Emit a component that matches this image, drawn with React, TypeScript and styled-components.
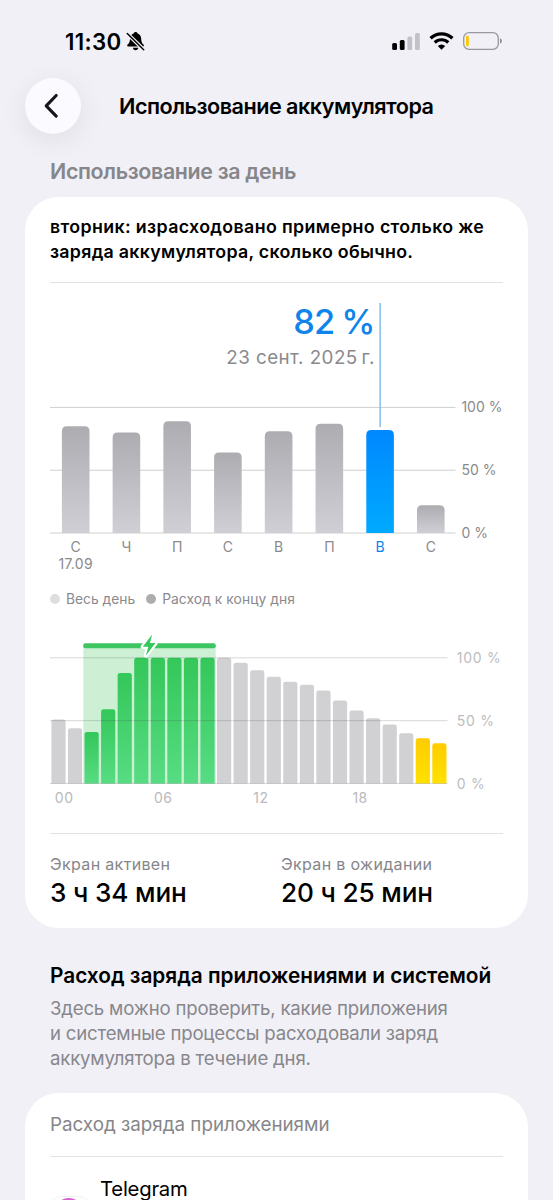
import React from 'react';
import styled, { createGlobalStyle } from 'styled-components';

const GlobalStyle = createGlobalStyle`
  body {
    margin: 0;
    background: #f1f0f6;
    font-family: Inter, 'Noto Sans', sans-serif;
    color: #000000;
    overflow: hidden;
  }
`;

const Screen = styled.div`
  width: 553px;
  height: 1200px;
  overflow: hidden;
  background: #f1f0f6;
`;

const StatusBar = styled.div`
  display: flex;
  justify-content: space-between;
  align-items: center;
  box-sizing: border-box;
  height: 78px;
  padding: 4px 50px 0 65px;
`;

const TimeBlock = styled.div`
  display: flex;
  align-items: center;
  gap: 4px;
  font-size: 22.3px;
  font-weight: 600;
  letter-spacing: 0.35px;
`;

const StatusIcons = styled.div`
  display: flex;
  align-items: center;
  gap: 9px;
`;

const NavBar = styled.header`
  display: flex;
  align-items: center;
  gap: 38px;
  height: 56px;
  padding-left: 25px;
`;

const BackButton = styled.button`
  display: flex;
  justify-content: center;
  align-items: center;
  width: 56px;
  height: 56px;
  padding: 0;
  border: none;
  border-radius: 50%;
  background: #fafaff;
  box-shadow: 0 6px 28px rgba(0, 0, 0, 0.08);
`;

const NavTitle = styled.h1`
  margin: 0;
  font-size: 21.6px;
  font-weight: 600;
  letter-spacing: -0.5px;
  white-space: nowrap;
`;

const SectionLabel = styled.h2`
  margin: 23px 0 0 50px;
  height: 28px;
  line-height: 28px;
  font-size: 21.4px;
  font-weight: 600;
  letter-spacing: -0.34px;
  color: #86868b;
`;

const Card = styled.section<{ $top: number }>`
  box-sizing: border-box;
  width: 503px;
  margin: ${({ $top }) => $top}px 0 0 25px;
  padding: 0 25px;
  border-radius: 34px;
  background: #ffffff;
`;

const Summary = styled.p`
  margin: 0;
  padding: 17px 0 18px;
  font-size: 17.8px;
  font-weight: 600;
  line-height: 25.2px;
  white-space: nowrap;
`;

const SummaryLine = styled.span<{ $spacing: number }>`
  display: block;
  letter-spacing: ${({ $spacing }) => $spacing}px;
`;

const Divider = styled.div`
  height: 1px;
  background: #e2e2e4;
`;

const Chart = styled.svg`
  display: block;
  overflow: visible;
`;

const Legend = styled.div`
  display: flex;
  align-items: center;
  gap: 11px;
  height: 24px;
  font-size: 13.8px;
  color: #8a8a8e;
`;

const LegendItem = styled.div<{ $dot: string; $spacing: number }>`
  display: flex;
  align-items: center;
  gap: 6px;
  letter-spacing: ${({ $spacing }) => $spacing}px;
  white-space: nowrap;

  &::before {
    content: '';
    width: 10px;
    height: 10px;
    border-radius: 50%;
    background: ${({ $dot }) => $dot};
  }
`;

const Stats = styled.div`
  display: grid;
  grid-template-columns: 231px 1fr;
  padding: 20px 0 18px;
`;

const StatLabel = styled.div`
  height: 22px;
  line-height: 20px;
  font-size: 16px;
  letter-spacing: 0.34px;
  color: #86868a;
`;

const StatValue = styled.div`
  height: 34px;
  line-height: 34px;
  font-size: 26.2px;
  font-weight: 500;
  letter-spacing: -0.17px;
`;

const Intro = styled.div`
  padding: 34px 0 0 50px;
`;

const IntroTitle = styled.h2`
  margin: 0 0 6px;
  line-height: 28px;
  font-size: 20.8px;
  font-weight: 600;
  white-space: nowrap;
`;

const IntroText = styled.p`
  margin: 0;
  line-height: 25px;
  font-size: 18.6px;
  letter-spacing: -0.19px;
  color: #87878c;
`;

const ListHeader = styled.div`
  padding: 20px 0 19px;
  line-height: 24px;
  font-size: 18.8px;
  color: #86868a;
`;

const AppRow = styled.div`
  display: flex;
  align-items: flex-start;
  gap: 10px;
  height: 90px;
  padding-top: 20px;
`;

const AppIcon = styled.svg`
  margin-top: 19px;
`;

const AppName = styled.div`
  line-height: 24px;
  font-size: 20.3px;
  letter-spacing: -0.22px;
`;

const AxisText = styled.text<{ $color?: string; $spacing?: number }>`
  font-size: 14px;
  letter-spacing: ${({ $spacing = 0 }) => $spacing}px;
  fill: ${({ $color = '#8a8a8e' }) => $color};
`;

const PercentText = styled.text`
  font-size: 34.4px;
  font-weight: 500;
  letter-spacing: -1px;
  word-spacing: -1px;
  fill: #0f84ea;
`;

const DateText = styled.text`
  font-size: 18.8px;
  letter-spacing: 0.45px;
  fill: #8a8a8e;
`;

const week = [
  { day: 'С', value: 85, date: '17.09' },
  { day: 'Ч', value: 80 },
  { day: 'П', value: 89 },
  { day: 'С', value: 64 },
  { day: 'В', value: 81 },
  { day: 'П', value: 87 },
  { day: 'В', value: 82, selected: true },
  { day: 'С', value: 22 },
];

const hours = [
  51, 44, 41, 59, 88, 100, 100, 100, 100, 100, 100, 96, 90, 85, 81, 78.5, 74,
  66, 58, 52, 47, 40, 36, 32,
];

const levels = [100, 50, 0];

// column with rounded top corners only
const columnPath = (
  x: number,
  y: number,
  w: number,
  bottom: number,
  r: number,
) =>
  `M${x} ${bottom}V${y + r}q0-${r} ${r}-${r}H${x + w - r}q${r} 0 ${r} ${r}V${bottom}Z`;

function WeekChart() {
  const bottom = 250;
  const scale = 1.256;
  return (
    <Chart width="453" height="304" viewBox="0 0 453 304">
      <defs>
        <linearGradient id="day" x1="0" y1="0" x2="0" y2="1">
          <stop offset="0" stopColor="#adacb1" />
          <stop offset="1" stopColor="#d0cfd6" />
        </linearGradient>
        <linearGradient id="selectedDay" x1="0" y1="0" x2="0" y2="1">
          <stop offset="0" stopColor="#0088ff" />
          <stop offset="1" stopColor="#00aaff" />
        </linearGradient>
      </defs>
      {levels.map((level) => (
        <g key={level}>
          <rect
            y={bottom - level * scale - 0.5}
            width="405.5"
            height="1"
            fill="#cfcfd1"
          />
          <AxisText x="411.4" y={bottom + 4.8 - level * scale}>
            {level} %
          </AxisText>
        </g>
      ))}
      <PercentText x="324.5" y="51" textAnchor="end">
        82 %
      </PercentText>
      <DateText x="324.9" y="81.3" textAnchor="end">
        23 сент. 2025{'\u2009'}г.
      </DateText>
      {week.map(({ day, value, date, selected }, i) => {
        const x = 11.9 + i * 50.73;
        const center = x + 13.8;
        return (
          <g key={i}>
            <path
              d={columnPath(x, bottom - value * scale, 27.6, bottom, 5)}
              fill={selected ? 'url(#selectedDay)' : 'url(#day)'}
            />
            {selected && (
              <rect
                x={center - 0.6}
                y="20"
                width="1.3"
                height="124"
                fill="#75b5e6"
              />
            )}
            <AxisText
              x={center}
              y="268.8"
              textAnchor="middle"
              $color={selected ? '#0a84f0' : undefined}
            >
              {day}
            </AxisText>
            {date && (
              <AxisText x={center} y="286" textAnchor="middle" $spacing={0.3}>
                {date}
              </AxisText>
            )}
          </g>
        );
      })}
    </Chart>
  );
}

function DayChart() {
  const bottom = 172.5;
  const scale = 1.257;
  const fillOf = (i: number) => {
    if (i >= 2 && i < 10) return 'url(#charging)';
    return i > 21 ? 'url(#lowPower)' : '#d1d1d3';
  };
  return (
    <Chart width="453" height="222" viewBox="0 0 453 222">
      <defs>
        <linearGradient id="charging" x1="0" y1="0" x2="0" y2="1">
          <stop offset="0" stopColor="#34c759" />
          <stop offset="1" stopColor="#57dc83" />
        </linearGradient>
        <linearGradient id="lowPower" x1="0" y1="0" x2="0" y2="1">
          <stop offset="0" stopColor="#ffcc00" />
          <stop offset="1" stopColor="#ffe100" />
        </linearGradient>
      </defs>
      <rect x="33.3" y="34" width="132.4" height="138.5" fill="#cdf0d5" />
      <rect x="33.3" y="32.3" width="132.4" height="5" rx="2" fill="#3cc560" />
      {hours.map((value, i) => (
        <path
          key={i}
          d={columnPath(
            1.4 + i * 16.56,
            bottom - value * scale,
            14.2,
            bottom,
            2.4,
          )}
          fill={fillOf(i)}
        />
      ))}
      {levels.map((level) => (
        <g key={level}>
          <rect
            y={bottom - level * scale - 0.5}
            width="397.5"
            height="1"
            fill="rgba(60, 60, 67, 0.2)"
          />
          <AxisText
            x="406.7"
            y={bottom + 5 - level * scale}
            $color="#bcbcbe"
            $spacing={0.75}
          >
            {level} %
          </AxisText>
        </g>
      ))}
      {['00', '06', '12', '18'].map((hour, i) => (
        <AxisText
          key={hour}
          x={4.8 + i * 99.2}
          y="192"
          $color="#b9b9bb"
          $spacing={0.5}
        >
          {hour}
        </AxisText>
      ))}
      <path
        d="M102.2 23.6 92.8 35.8h5.5l-2.4 8.6 9.6-12.3h-5.6z"
        fill="#34c759"
        stroke="#ffffff"
        strokeWidth="4.4"
        strokeLinejoin="round"
        paintOrder="stroke"
      />
    </Chart>
  );
}

function BellOffIcon() {
  return (
    <svg width="19" height="20" viewBox="0 0 19 20">
      <path
        d="M9.6 1c1 0 1.8.7 2 1.6 2.3.8 3.5 2.8 3.6 5.3.1 3 1 4.3 2.3 5.7.4.5.5 1 .3 1.4-.2.4-.6.6-1.1.6H2.5c-.6 0-1-.2-1.2-.6-.2-.5-.1-.9.3-1.4C3 12.2 3.900 10.900 4 7.900c.1-2.500 1.300-4.500 3.600-5.300.2-.9 1-1.600 2-1.600zM6.800 16.700h5.600c-.3 1.500-1.400 2.500-2.800 2.500s-2.500-1-2.800-2.500z"
        fill="#000"
      />
      <path d="M1.300 2.500 17.700 18.700" stroke="#f1f0f6" strokeWidth="3.8" />
      <path
        d="M1.300 2.500 17.700 18.700"
        stroke="#000"
        strokeWidth="1.5"
        strokeLinecap="round"
      />
    </svg>
  );
}

function CellularIcon() {
  return (
    <svg width="28" height="17" viewBox="0 0 28 17">
      <rect x="0.2" y="10" width="4.8" height="7" rx="1.5" fill="#000" />
      <rect x="7.8" y="7" width="4.8" height="10" rx="1.5" fill="#000" />
      <rect x="15.4" y="3.5" width="4.8" height="13.5" rx="1.5" fill="#c2c1c9" />
      <rect x="23" y="0" width="4.8" height="17" rx="1.5" fill="#c2c1c9" />
    </svg>
  );
}

function WifiIcon() {
  return (
    <svg width="25" height="18" viewBox="0 0 25 18" fill="none" stroke="#000">
      <path d="M1.6 6.3a15.600 15.600 0 0 1 21.800 0" strokeWidth="3.3" />
      <path d="M5.7 10.5a9.800 9.800 0 0 1 13.600 0" strokeWidth="3.2" />
      <path
        d="M12.5 17.7 8.8 13.9a5.300 5.300 0 0 1 7.400 0z"
        fill="#000"
        stroke="none"
      />
    </svg>
  );
}

function BatteryIcon() {
  return (
    <svg width="40" height="18" viewBox="0 0 40 18">
      <rect
        x="0.7"
        y="0.7"
        width="34.6"
        height="16.6"
        rx="5.4"
        fill="none"
        stroke="#98979d"
        strokeWidth="1.3"
      />
      <path d="M37 6.300q2 .8 2 2.700t-2 2.700z" fill="#8f8e94" />
      <rect x="3" y="3.7" width="2.8" height="10.6" rx="1.3" fill="#ffc700" />
    </svg>
  );
}

function App() {
  return (
    <>
      <GlobalStyle />
      <Screen>
        <StatusBar>
          <TimeBlock>
            11:30
            <BellOffIcon />
          </TimeBlock>
          <StatusIcons>
            <CellularIcon />
            <WifiIcon />
            <BatteryIcon />
          </StatusIcons>
        </StatusBar>
        <NavBar>
          <BackButton aria-label="Назад">
            <svg width="20" height="26" viewBox="0 0 20 26" fill="none">
              <path
                d="M13.200 2.500 3.200 12.800l10 10.300"
                stroke="#15151a"
                strokeWidth="3.1"
                strokeLinecap="round"
                strokeLinejoin="round"
              />
            </svg>
          </BackButton>
          <NavTitle>Использование аккумулятора</NavTitle>
        </NavBar>
        <SectionLabel>Использование за день</SectionLabel>
        <Card $top={12}>
          <Summary>
            <SummaryLine $spacing={0.36}>
              вторник: израсходовано примерно столько же
            </SummaryLine>
            <SummaryLine $spacing={0.28}>
              заряда аккумулятора, сколько обычно.
            </SummaryLine>
          </Summary>
          <Divider />
          <WeekChart />
          <Legend>
            <LegendItem $dot="#dededf" $spacing={0}>
              Весь день
            </LegendItem>
            <LegendItem $dot="#adadaf" $spacing={0.08}>
              Расход к концу дня
            </LegendItem>
          </Legend>
          <DayChart />
          <Divider />
          <Stats>
            <div>
              <StatLabel>Экран активен</StatLabel>
              <StatValue>3 ч 34 мин</StatValue>
            </div>
            <div>
              <StatLabel>Экран в ожидании</StatLabel>
              <StatValue>20 ч 25 мин</StatValue>
            </div>
          </Stats>
        </Card>
        <Intro>
          <IntroTitle>Расход заряда приложениями и системой</IntroTitle>
          <IntroText>
            Здесь можно проверить, какие приложения
            <br />
            и системные процессы расходовали заряд
            <br />
            аккумулятора в течение дня.
          </IntroText>
        </Intro>
        <Card $top={22}>
          <ListHeader>Расход заряда приложениями</ListHeader>
          <Divider />
          <AppRow>
            <AppIcon width="40" height="40" viewBox="0 0 40 40">
              <rect
                x="0.5"
                y="0.5"
                width="39"
                height="39"
                rx="10"
                fill="#ffffff"
                stroke="#f0f0f3"
              />
              <circle cx="18.8" cy="16.5" r="14.5" fill="#d45fd0" />
            </AppIcon>
            <AppName>Telegram</AppName>
          </AppRow>
        </Card>
      </Screen>
    </>
  );
}

export default App;
